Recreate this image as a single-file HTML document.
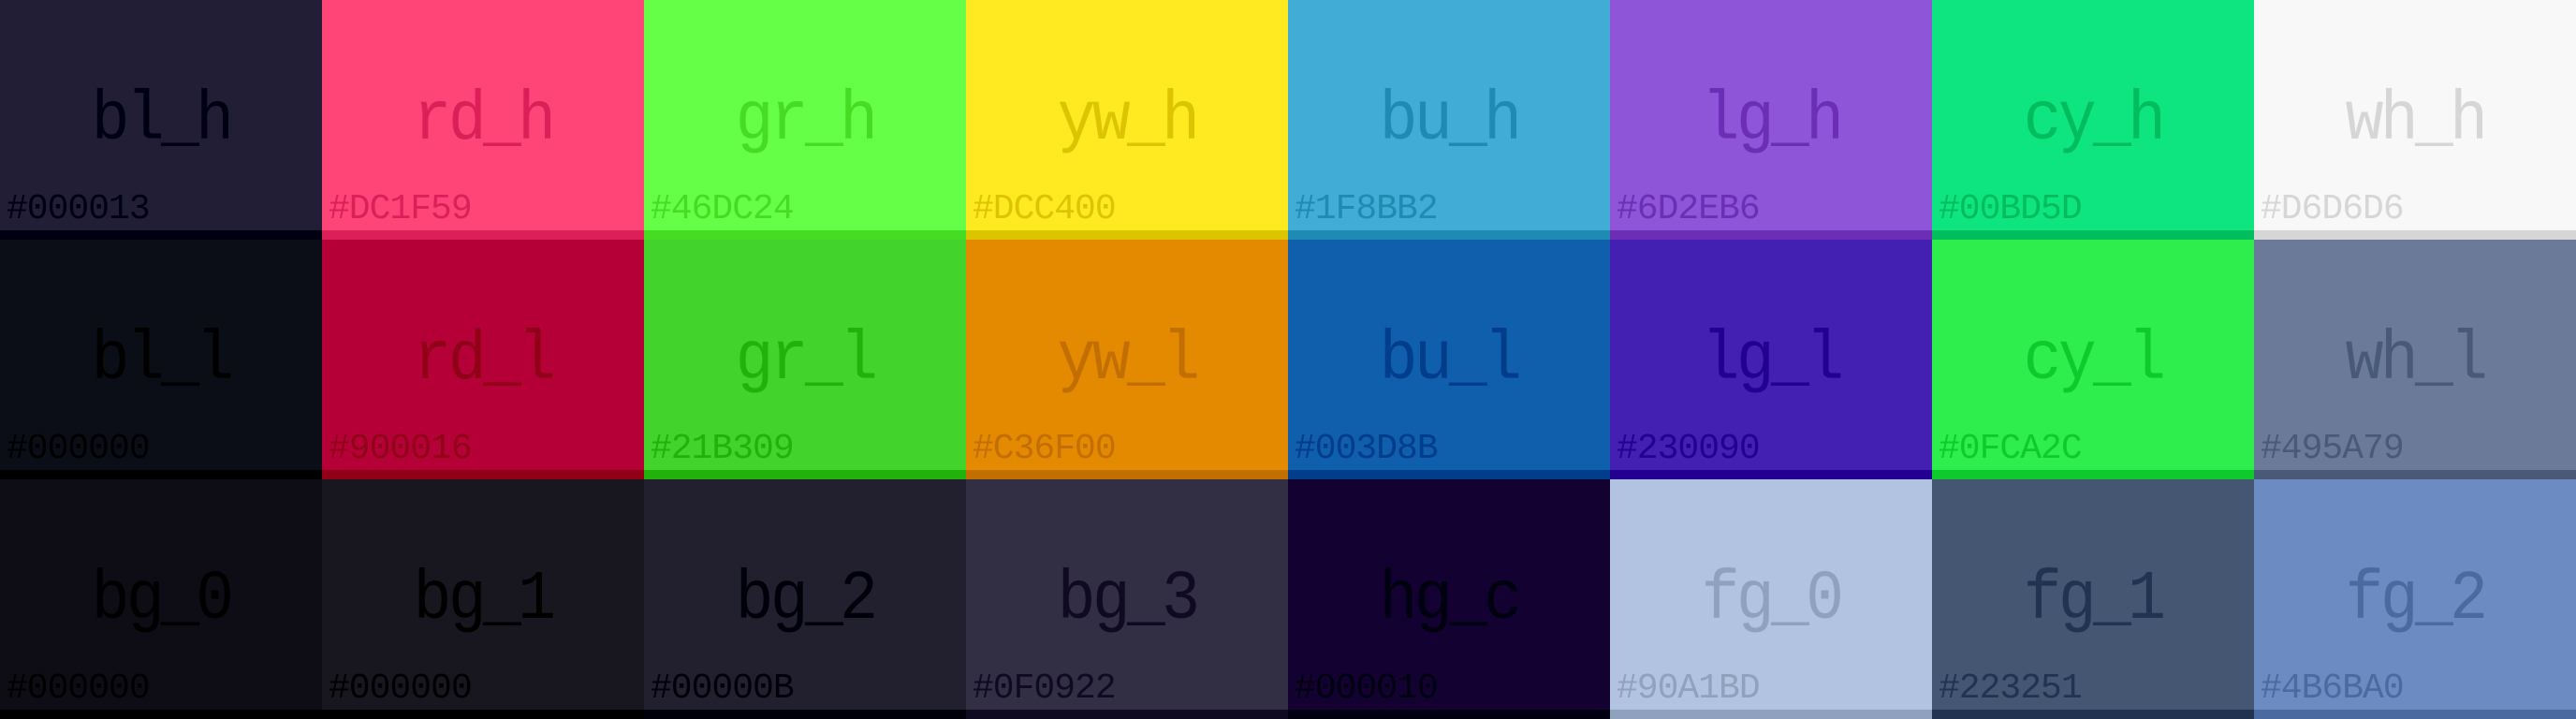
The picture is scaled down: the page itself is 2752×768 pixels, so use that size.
<!DOCTYPE html>
<html><head><meta charset="utf-8"><style>
html,body{margin:0;padding:0;width:2752px;height:768px;overflow:hidden;background:#000}
.g{display:grid;grid-template-columns:repeat(8,344px);grid-template-rows:repeat(3,256px)}
.c{position:relative;box-sizing:border-box;border-bottom:10px solid var(--f);font-family:"Liberation Mono","DejaVu Sans Mono",monospace;color:var(--f)}
.n{position:absolute;left:0;right:0;top:92px;text-align:center;font-size:74px;line-height:74px;letter-spacing:-4px;transform:scaleX(0.92)}
.h{position:absolute;left:7px;top:205px;font-size:38px;line-height:38px;letter-spacing:-1px}
</style></head><body><div class="g">
<div class="c" style="background:#211E36;--f:#000013"><div class="n">bl_h</div><div class="h">#000013</div></div>
<div class="c" style="background:#FF4577;--f:#DC1F59"><div class="n">rd_h</div><div class="h">#DC1F59</div></div>
<div class="c" style="background:#66FF47;--f:#46DC24"><div class="n">gr_h</div><div class="h">#46DC24</div></div>
<div class="c" style="background:#FFE921;--f:#DCC400"><div class="n">yw_h</div><div class="h">#DCC400</div></div>
<div class="c" style="background:#41ACD5;--f:#1F8BB2"><div class="n">bu_h</div><div class="h">#1F8BB2</div></div>
<div class="c" style="background:#8E55D8;--f:#6D2EB6"><div class="n">lg_h</div><div class="h">#6D2EB6</div></div>
<div class="c" style="background:#0EE480;--f:#00BD5D"><div class="n">cy_h</div><div class="h">#00BD5D</div></div>
<div class="c" style="background:#F8F8F8;--f:#D6D6D6"><div class="n">wh_h</div><div class="h">#D6D6D6</div></div>

<div class="c" style="background:#0C0E17;--f:#000000"><div class="n">bl_l</div><div class="h">#000000</div></div>
<div class="c" style="background:#B50037;--f:#900016"><div class="n">rd_l</div><div class="h">#900016</div></div>
<div class="c" style="background:#42D42D;--f:#21B309"><div class="n">gr_l</div><div class="h">#21B309</div></div>
<div class="c" style="background:#E38A00;--f:#C36F00"><div class="n">yw_l</div><div class="h">#C36F00</div></div>
<div class="c" style="background:#0F5FAD;--f:#003D8B"><div class="n">bu_l</div><div class="h">#003D8B</div></div>
<div class="c" style="background:#4420B2;--f:#230090"><div class="n">lg_l</div><div class="h">#230090</div></div>
<div class="c" style="background:#2EEE4E;--f:#0FCA2C"><div class="n">cy_l</div><div class="h">#0FCA2C</div></div>
<div class="c" style="background:#6B7A98;--f:#495A79"><div class="n">wh_l</div><div class="h">#495A79</div></div>

<div class="c" style="background:#0E0D16;--f:#000000"><div class="n">bg_0</div><div class="h">#000000</div></div>
<div class="c" style="background:#18161F;--f:#000000"><div class="n">bg_1</div><div class="h">#000000</div></div>
<div class="c" style="background:#221F2E;--f:#00000B"><div class="n">bg_2</div><div class="h">#00000B</div></div>
<div class="c" style="background:#322F44;--f:#0F0922"><div class="n">bg_3</div><div class="h">#0F0922</div></div>
<div class="c" style="background:#120131;--f:#000010"><div class="n">hg_c</div><div class="h">#000010</div></div>
<div class="c" style="background:#B1C3E0;--f:#90A1BD"><div class="n">fg_0</div><div class="h">#90A1BD</div></div>
<div class="c" style="background:#455673;--f:#223251"><div class="n">fg_1</div><div class="h">#223251</div></div>
<div class="c" style="background:#6B8BC2;--f:#4B6BA0"><div class="n">fg_2</div><div class="h">#4B6BA0</div></div>
</div></body></html>
